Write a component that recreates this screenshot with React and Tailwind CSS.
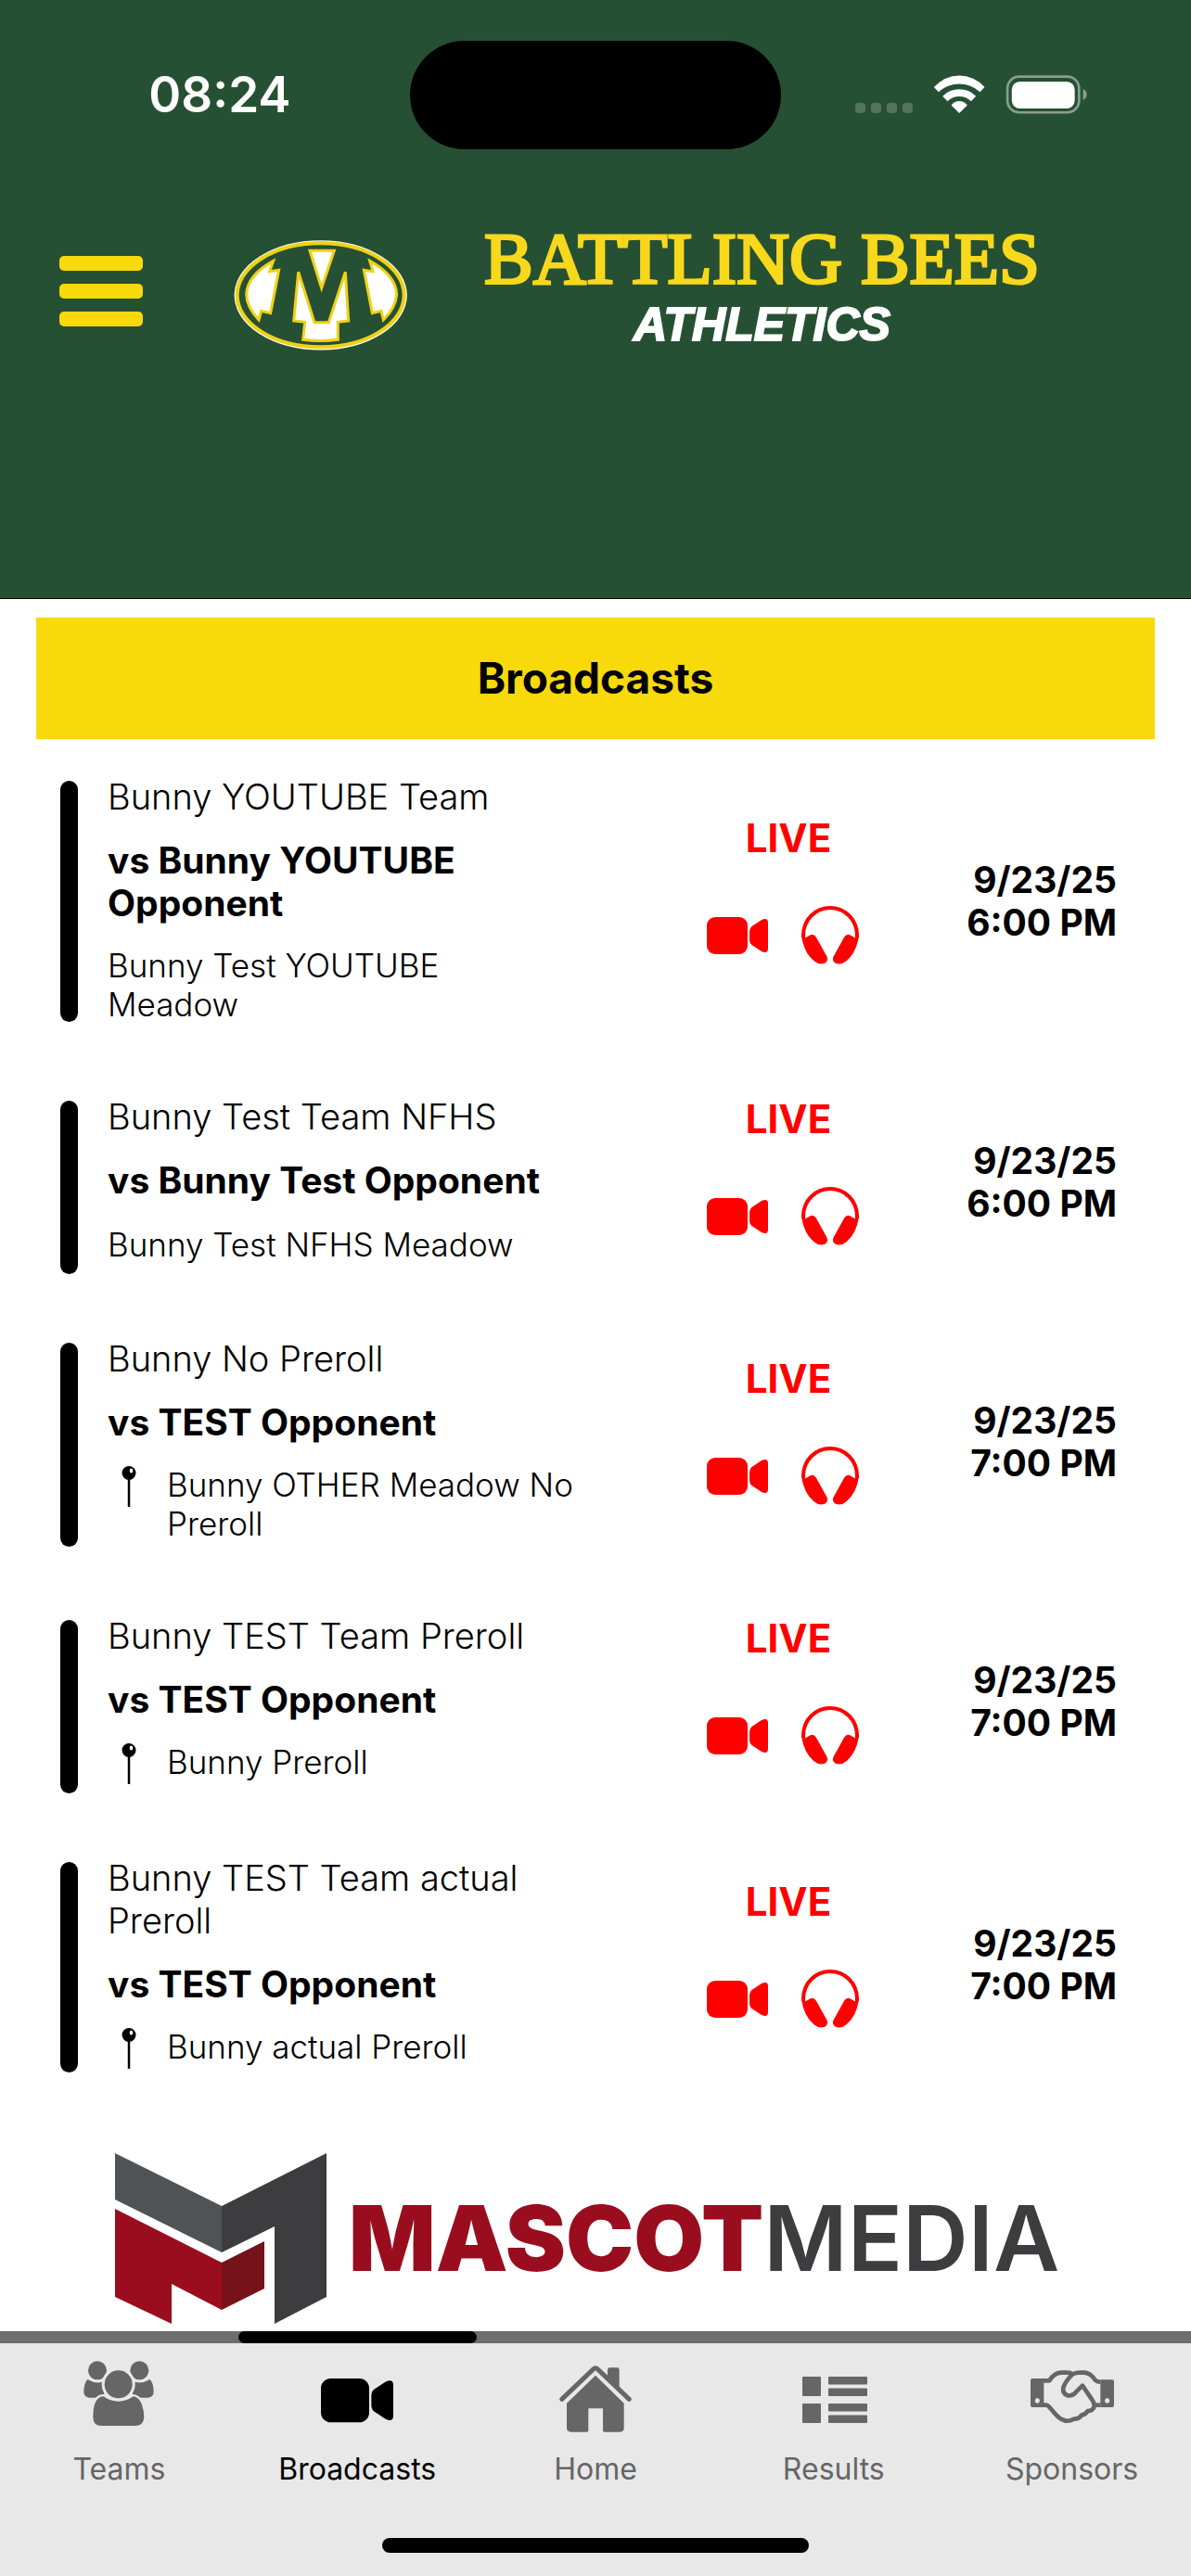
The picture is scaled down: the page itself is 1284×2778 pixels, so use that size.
// App.jsx
// Broadcasts screen: team header, list of live broadcasts, sponsor banner
// and the bottom tab bar.

import { useState } from 'react'
import clsx from 'clsx'

const BROADCASTS = [
  {
    id: 1,
    team: 'Bunny YOUTUBE Team',
    opponent: 'vs Bunny YOUTUBE Opponent',
    venue: 'Bunny Test YOUTUBE Meadow',
    date: '9/23/25',
    time: '6:00 PM',
  },
  {
    id: 2,
    team: 'Bunny Test Team NFHS',
    opponent: 'vs Bunny Test Opponent',
    venue: 'Bunny Test NFHS Meadow',
    date: '9/23/25',
    time: '6:00 PM',
  },
  {
    id: 3,
    team: 'Bunny No Preroll',
    opponent: 'vs TEST Opponent',
    venue: 'Bunny OTHER Meadow No Preroll',
    pinned: true,
    date: '9/23/25',
    time: '7:00 PM',
  },
  {
    id: 4,
    team: 'Bunny TEST Team Preroll',
    opponent: 'vs TEST Opponent',
    venue: 'Bunny Preroll',
    pinned: true,
    date: '9/23/25',
    time: '7:00 PM',
  },
  {
    id: 5,
    team: 'Bunny TEST Team actual Preroll',
    opponent: 'vs TEST Opponent',
    venue: 'Bunny actual Preroll',
    pinned: true,
    date: '9/23/25',
    time: '7:00 PM',
  },
]

/* ── Icons ── */

function VideoIcon({ className }) {
  return (
    <svg viewBox="0 0 66 40" className={className} fill="currentColor" aria-hidden="true">
      <rect width="44" height="40" rx="9" />
      <path d="M46 15.500Q46 12 48.500 10L59 3Q66 0 66 6V34Q66 40 59 37L48.500 30Q46 28 46 24.500Z" />
    </svg>
  )
}

function HeadphonesIcon({ className }) {
  return (
    <svg viewBox="0 0 61 62" className={className} fill="currentColor" aria-hidden="true">
      <path d="M0 33V30.500a30.500 30.500 0 0 1 61 0V33L57 35V30.500a26.500 26.500 0 0 0-53 0V35Z" />
      <path d="M0 32L4 34L9 31Q13 29 15.500 33L27 53.500Q29 59 24 61Q18 62.500 13 58Q3 50 0 32Z" />
      <path d="M61 32L57 34L52 31Q48 29 45.500 33L34 53.500Q32 59 37 61Q43 62.500 48 58Q58 50 61 32Z" />
    </svg>
  )
}

function PinIcon({ className }) {
  return (
    <svg viewBox="0 0 46 46" className={className} aria-hidden="true">
      <path d="M23 10V45" stroke="#000" strokeWidth="2.500" />
      <circle cx="23" cy="8.500" r="7.500" />
      <ellipse cx="25.500" cy="6" rx="1.800" ry="2.500" fill="#fff" />
    </svg>
  )
}

function TeamsIcon() {
  return (
    <svg viewBox="31 33 288 288" className="size-24" fill="currentColor" aria-hidden="true">
      <circle cx="106" cy="79" r="30" />
      <circle cx="242" cy="79" r="30" />
      <path d="M74 108Q100 124 128 115V167H80Q62 166 62 148Q62 122 74 108Z" />
      <path d="M276 108Q250 124 220 115V167H270Q288 166 288 148Q288 122 276 108Z" />
      <path
        d="M125 163Q148 179 174 179Q200 179 222 163Q240 165 250 190Q257 210 257 230Q255 258 228 258H120Q92 258 92 230Q92 165 125 163Z"
        stroke="#e8e8e8" strokeWidth="14" paintOrder="stroke"
      />
      <circle cx="174" cy="124" r="45" stroke="#e8e8e8" strokeWidth="18" paintOrder="stroke" />
    </svg>
  )
}

function BroadcastsIcon() {
  return (
    <span className="grid size-24 place-items-center">
      <VideoIcon className="w-[78px]" />
    </span>
  )
}

function HomeIcon() {
  return (
    <svg viewBox="12 33 288 288" className="size-24" fill="currentColor" aria-hidden="true">
      <path d="M195 110V77Q195 70 202 70H226Q233 70 233 77V142Z" />
      <path d="M47 172L150 74Q156 69 162 74L265 172" fill="none" stroke="currentColor" strokeWidth="15" strokeLinecap="round" />
      <path d="M63 185L156 95L248 185V265Q248 278 235 278H185Q180 278 180 273V202H133V273Q133 278 128 278H77Q63 278 63 265Z" />
    </svg>
  )
}

function ResultsIcon() {
  return (
    <svg viewBox="0 0 96 96" className="size-24" fill="currentColor" aria-hidden="true">
      <rect x="14" y="22" width="20" height="21" rx="1" />
      <rect x="14" y="51" width="20" height="21" rx="1" />
      <rect x="42" y="22" width="42" height="8.500" rx="1" />
      <rect x="42" y="34.500" width="42" height="8.500" rx="1" />
      <rect x="42" y="51" width="42" height="8.500" rx="1" />
      <rect x="42" y="63.500" width="42" height="8.500" rx="1" />
    </svg>
  )
}

function SponsorsIcon() {
  return (
    <svg viewBox="83 33 288 288" className="size-24" fill="none" stroke="currentColor" strokeWidth="14" strokeLinejoin="round" aria-hidden="true">
      <g fill="currentColor" stroke="none">
        <path fillRule="evenodd" d="M98 105H135V198H98Q92 198 92 192V111Q92 105 98 105ZM114 169a8 8 0 1 0 .1 0Z" />
        <path fillRule="evenodd" d="M318 109H356Q362 109 362 115V192Q362 198 356 198H318ZM340 169a8 8 0 1 0 .1 0Z" />
      </g>
      <path d="M134 112H153Q169 86 192 86H210Q222 86 228 91Q240 86 250 86H265Q284 87 298 106Q304 116 318 116" />
      <path d="M228 91Q206 112 198 134Q194 154 212 160Q229 163 239 149L260 128L290 172Q304 192 294 203Q288 211 277 210Q270 222 257 224Q248 237 232 236Q214 246 200 240Q186 236 174 222L154 199Q149 192 143 191H134" />
      <path d="M298 191H318" />
    </svg>
  )
}

function StatusIcons() {
  return (
    <svg viewBox="60 90 760 140" className="w-[253px]" fill="#fff" role="img" aria-label="Wi-Fi on, battery full">
      <g opacity="0.200">
        <rect x="63" y="186" width="33" height="33" rx="10" />
        <rect x="114" y="186" width="33" height="33" rx="10" />
        <rect x="165" y="186" width="33" height="33" rx="10" />
        <rect x="216" y="186" width="33" height="33" rx="10" />
      </g>
      <path d="M318 135A109 109 0 0 1 482 135L467 151A99 99 0 0 0 333 151Z" />
      <path d="M346 164A76 76 0 0 1 454 164L438 181A53 53 0 0 0 362 181Z" />
      <path d="M374 194A31 31 0 0 1 426 194L400 219Z" />
      <g opacity="0.450">
        <rect x="556" y="101" width="232" height="116" rx="38" fill="none" stroke="#fff" strokeWidth="8" />
        <path d="M801 141Q813 147 813 159Q813 171 801 177Z" />
      </g>
      <rect x="570" y="117" width="204" height="87" rx="26" />
    </svg>
  )
}

/* ── Logos ── */

function TeamBadge() {
  return (
    <svg viewBox="96 84 564 362" className="w-[188px]" role="img" aria-label="Team badge">
      <ellipse cx="377" cy="265" rx="277" ry="175" fill="none" stroke="#fff" strokeWidth="5" />
      <ellipse cx="377" cy="265" rx="270" ry="168" fill="none" stroke="#f0d116" strokeWidth="12" />
      <g fill="#fff" stroke="#f0d116" strokeWidth="9">
        <path d="M342 121H421L380 242Z" />
        <path d="M305 190L357 353H403L457 190L467 348L433 352V409Q377 416 320 409L326 352L290 348Z" />
        <path d="M224 154Q140 200 137 262Q138 305 177 345L185 316L215 323L242 184L212 188Z" />
        <path d="M536 154Q620 200 623 262Q620 305 580 345L573 316L544 323L517 184L546 188Z" />
      </g>
    </svg>
  )
}

function MascotMark() {
  return (
    <svg viewBox="0 0 228 184" className="w-[228px]" aria-hidden="true">
      <path fill="#505355" d="M0 0L115 57V107L0 50Z" />
      <path fill="#3d3d3f" d="M115 57L228 0V155L172 184V79L115 107Z" />
      <path fill="#990d1e" d="M0 60L115 118V169L61 141V184L0 155Z" />
      <path fill="#75121a" d="M115 118L161 95V146L115 169Z" />
    </svg>
  )
}

/* ── Sections ── */

function Header() {
  return (
    <header className="border-b border-black bg-[#265033] pt-11 pb-64">
      <div className="flex items-center text-white">
        <div className="flex flex-1 justify-center pl-8">
          <time className="text-[53px] leading-none font-semibold">08:24</time>
        </div>
        <div className="h-[117px] w-[400px] rounded-full bg-black" />
        <div className="flex flex-1 justify-center pr-8">
          <StatusIcons />
        </div>
      </div>

      <div className="mt-[86px] flex items-center px-16">
        <button type="button" aria-label="Open menu" className="mb-2 flex w-[90px] flex-col gap-[14px]">
          <span className="h-4 rounded-[5px] bg-[#f8d90a]" />
          <span className="h-4 rounded-[5px] bg-[#f8d90a]" />
          <span className="h-4 rounded-[5px] bg-[#f8d90a]" />
        </button>
        <div className="ml-[98px]">
          <TeamBadge />
        </div>
        <h1 className="ml-[82px] flex flex-col items-center whitespace-nowrap">
          <span className="font-['Liberation_Serif',serif] text-[79px] leading-[64px] text-[#f8d81c] [-webkit-text-stroke:3px_#f8d81c]">
            BATTLING BEES
          </span>
          <span className="font-['Liberation_Sans_Narrow','Liberation_Sans',sans-serif] text-[50px] leading-[78px] font-bold text-white italic [-webkit-text-stroke:2px_#fff]">
            ATHLETICS
          </span>
        </h1>
      </div>
    </header>
  )
}

function BroadcastRow({ item }) {
  return (
    <li className="flex pr-20 pl-[65px]">
      <div className="pt-[43px]">
        <div className="h-[86%] w-[19px] rounded-full bg-black" />
      </div>

      <div className="flex-1 pt-[37px] pr-24 pb-10 pl-8 text-[38px] leading-[46px]">
        <p className="font-light">{item.team}</p>
        <p className="mt-[23px] text-[39px] font-bold">{item.opponent}</p>
        <div className={clsx('mt-[23px] flex min-h-[46px]', !item.pinned && 'items-center')}>
          {item.pinned && <PinIcon className="mr-[18px] size-[46px] shrink-0" />}
          <p className="max-w-[460px] text-[35px] leading-[42px] font-light">{item.venue}</p>
        </div>
      </div>

      <div className="w-[210px] self-center text-[#ff0000]">
        <p className="text-center text-[42px] leading-[48px] font-bold">LIVE</p>
        <div className="mt-[26px] flex">
          <button type="button" aria-label={`Watch ${item.team}`} className="grid h-[110px] w-[100px] place-items-center">
            <VideoIcon className="w-[66px]" />
          </button>
          <button type="button" aria-label={`Listen to ${item.team}`} className="grid h-[110px] w-[100px] place-items-center">
            <HeadphonesIcon className="w-[62px]" />
          </button>
        </div>
      </div>

      <div className="w-[249px] self-center text-right text-[39px] leading-[46px] font-bold">
        <p>{item.date}</p>
        <p>{item.time}</p>
      </div>
    </li>
  )
}

const TABS = [
  { id: 'teams', label: 'Teams', icon: TeamsIcon },
  { id: 'broadcasts', label: 'Broadcasts', icon: BroadcastsIcon },
  { id: 'home', label: 'Home', icon: HomeIcon },
  { id: 'results', label: 'Results', icon: ResultsIcon },
  { id: 'sponsors', label: 'Sponsors', icon: SponsorsIcon },
]

function TabBar({ active, onSelect }) {
  return (
    <nav className="bg-[#e8e8e8]">
      <div className="grid grid-cols-5">
        {TABS.map(({ id, label, icon: Icon }) => {
          const isActive = id === active
          return (
            <button
              key={id}
              type="button"
              onClick={() => onSelect(id)}
              aria-current={isActive ? 'page' : undefined}
              className={clsx('flex flex-col items-center', isActive ? 'text-black' : 'text-[#666666]')}
            >
              <span className="h-[13px] w-full bg-[#6e6e6e]">
                {isActive && <span className="block h-full rounded-full bg-black" />}
              </span>
              <span className="mt-[14px]">
                <Icon />
              </span>
              <span className="mt-[6px] text-[32px] leading-10">{label}</span>
            </button>
          )
        })}
      </div>
      <div className="mx-auto mt-[54px] mb-[25px] h-4 w-[460px] rounded-full bg-black" />
    </nav>
  )
}

export default function App() {
  const [tab, setTab] = useState('broadcasts')

  return (
    <div className="flex min-h-screen flex-col bg-white font-[Inter,sans-serif] text-black">
      <Header />

      <main className="flex-1">
        <h2 className="mx-[39px] mt-5 bg-[#f8d90a] py-[39px] text-center text-[46px] leading-[53px] font-bold">
          Broadcasts
        </h2>
        <ul className="mt-0.5">
          {BROADCASTS.map(item => (
            <BroadcastRow key={item.id} item={item} />
          ))}
        </ul>

        {/* Sponsor banner */}
        <a href="#sponsor" className="mt-[50px] flex items-center gap-6 px-[124px] text-[98px] leading-none">
          <MascotMark />
          <span className="whitespace-nowrap">
            <span className="font-black text-[#990d1e]">MASCOT</span>
            <span className="font-semibold text-[#3d3d3f]">MEDIA</span>
          </span>
        </a>
      </main>

      <TabBar active={tab} onSelect={setTab} />
    </div>
  )
}
